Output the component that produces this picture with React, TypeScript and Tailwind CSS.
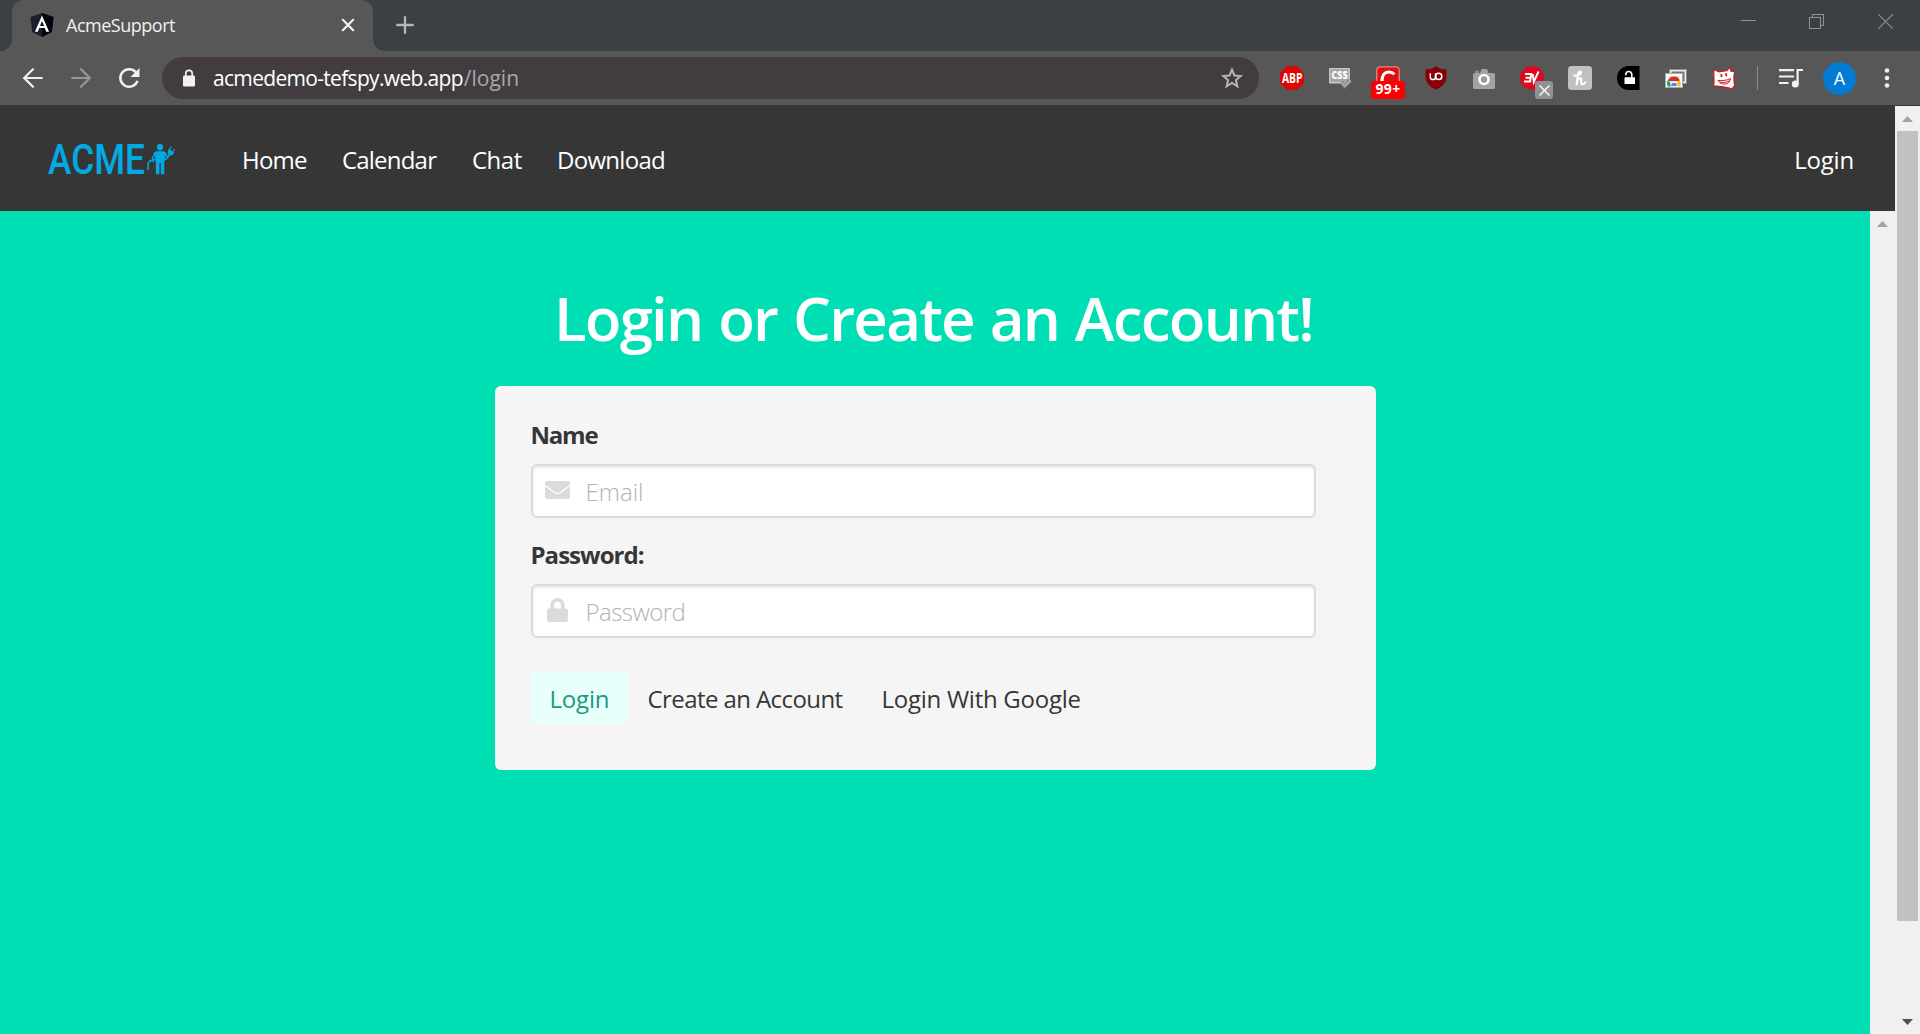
import React from "react";

const SANS = "font-['Open_Sans',sans-serif]";

function Favicon() {
  return (
    <svg className="h-6 w-6" viewBox="0 0 24 24">
      <path d="M12 0 23.5 4 21.8 19 12 24 2.2 19 .5 4Z" fill="#1b1e2b" />
      <path d="M12 0 23.5 4 21.8 19 12 24Z" fill="#03040c" />
      <path d="M12 2.6 4.9 18.8h2.9l1.4-3.7h5.6l1.4 3.7h2.9L12 2.6Zm0 5.4 2.1 5H9.9L12 8Z" fill="#fff" />
    </svg>
  );
}

function TabStrip() {
  return (
    <div className="flex h-[51px] bg-[#3c4043]">
      <div className="flex w-3 items-end bg-[#575757]">
        <div className="h-full w-full rounded-br-[12px] bg-[#3c4043]" />
      </div>
      <div className="w-[361px] bg-[#3c4043]">
        <div className="flex h-full items-center rounded-t-[12px] bg-[#575757] pr-[18px] pb-[2px] pl-[18px]">
          <Favicon />
          <span className="ml-3 text-[18px] leading-6 tracking-[-0.49px] text-[#f1f1f1]">AcmeSupport</span>
          <svg className="ml-auto h-[14px] w-[14px]" viewBox="0 0 14 14" stroke="#f1f1f1" strokeWidth="2.2" strokeLinecap="round">
            <path d="m1.8 1.8 10.4 10.4M12.2 1.8 1.8 12.2" />
          </svg>
        </div>
      </div>
      <div className="w-3 bg-[#575757]">
        <div className="h-full w-full rounded-bl-[12px] bg-[#3c4043]" />
      </div>
      <svg className="mt-4 ml-[11px] h-[18px] w-[18px]" viewBox="0 0 18 18" stroke="#b4b6b8" strokeWidth="2.4" strokeLinecap="round">
        <path d="M9 1.2v15.6M1.2 9h15.6" />
      </svg>
      <div className="ml-auto flex h-[43px] items-center text-[#8f9294]">
        <svg className="mr-[53px] h-[15px] w-[15px]" viewBox="0 0 15 15" stroke="currentColor" shapeRendering="crispEdges">
          <path d="M0 6.5h15" />
        </svg>
        <svg className="mr-[54px] h-[15px] w-[15px]" viewBox="0 0 15 15" stroke="currentColor" fill="none" shapeRendering="crispEdges">
          <path d="M.5 3.5h11v11H.5zM3.5 3V.5h11v11H12" />
        </svg>
        <svg className="mr-[27px] h-[15px] w-[15px]" viewBox="0 0 15 15" stroke="currentColor" strokeWidth="1.1">
          <path d="m0 0 15 15M15 0 0 15" />
        </svg>
      </div>
    </div>
  );
}

function AdblockIcon() {
  return (
    <svg className="h-6 w-6" viewBox="0 0 24 24">
      <path d="M7 0h10l7 7v10l-7 7H7l-7-7V7Z" fill="#dd0606" />
      <text x="2" y="17" fontFamily="Open Sans" fontSize="13.5" fontWeight="700" fill="#fff" textLength="20.500" lengthAdjust="spacingAndGlyphs">ABP</text>
    </svg>
  );
}

function CssIcon() {
  return (
    <svg className="h-6 w-6" viewBox="0 0 24 24">
      <rect x="1" y="2" width="21" height="15.5" rx="1" fill="#a5a5a5" />
      <rect x="1.700" y="2.700" width="19.600" height="14" rx=".5" fill="none" stroke="#c9c9c9" strokeWidth="1.200" />
      <text x="3.600" y="13.200" fontFamily="Open Sans" fontSize="10.500" fontWeight="800" fill="#fff" textLength="16" lengthAdjust="spacingAndGlyphs">CSS</text>
      <path d="m13.500 16.200 3.200 3.800 5.800-5.600" fill="none" stroke="#777" strokeWidth="4" />
      <path d="m13.500 16.200 3.200 3.800 5.800-5.600" fill="none" stroke="#aaa" strokeWidth="2.400" />
    </svg>
  );
}

function ColorIcon() {
  return (
    <div className="relative h-6 w-6">
      <svg className="h-6 w-6" viewBox="0 0 24 24">
        <rect x=".8" y=".8" width="22.400" height="22.400" rx="3.500" fill="#e01010" stroke="#f08080" strokeWidth="1.300" />
        <path d="M6 15c0-5.500 2.500-9 7-9 2.500 0 4 .8 5.300 2.300" fill="none" stroke="#fff" strokeWidth="3.200" />
      </svg>
      <span className="absolute top-[15px] left-[-5px] flex h-[18px] w-[34px] items-center justify-center rounded-[3px] bg-[#fb0000] pb-[2px] text-[14px] leading-4 font-bold tracking-[0.300px] text-white">
        99+
      </span>
    </div>
  );
}

function ShieldIcon() {
  return (
    <svg className="h-6 w-6" viewBox="0 0 24 24">
      <path d="M12 .3c3 2.200 6.500 3.200 10.500 3.200V10c0 7-4 10.500-10.500 13.700C5.500 20.500 1.500 17 1.500 10V3.500C5.500 3.500 9 2.500 12 .3Z" fill="#860006" />
      <path d="M6.300 7.300v3.600a2.600 2.600 0 0 0 5.200 0V7.300" fill="none" stroke="#fff" strokeWidth="1.500" />
      <circle cx="14.700" cy="10.400" r="3.100" fill="none" stroke="#fff" strokeWidth="1.500" />
    </svg>
  );
}

function CameraIcon() {
  return (
    <svg className="h-6 w-6" viewBox="0 0 24 24">
      <rect x="3" y="4.500" width="4" height="4" rx="1" fill="#8b8b8b" />
      <path d="M2.500 7H8l1.500-4h5.500l1.500 4h5a1.500 1.500 0 0 1 1.500 1.500v13a1.500 1.500 0 0 1-1.500 1.500h-19A1.500 1.500 0 0 1 1 21.500v-13A1.500 1.500 0 0 1 2.500 7Z" fill="#a3a3a3" />
      <circle cx="12" cy="13.500" r="4.500" fill="#999" stroke="#fff" strokeWidth="2.600" />
    </svg>
  );
}

function ExpressIcon() {
  return (
    <div className="relative h-6 w-6">
      <svg className="h-6 w-6" viewBox="0 0 24 24">
        <circle cx="12" cy="12" r="12" fill="#da0a20" />
        <path d="M5 8h6.300l-1.200 7.500H4M5.500 11.800h5M12.800 8.200l1 7.800L18.500 5.500" fill="none" stroke="#fff" strokeWidth="1.900" />
      </svg>
      <span className="absolute top-[15px] left-[15px] flex h-[18px] w-[18px] items-center justify-center rounded-[3px] bg-[#929292]">
        <svg className="h-[11px] w-[11px]" viewBox="0 0 11 11" stroke="#fff" strokeWidth="1.400">
          <path d="m.5.5 10 10M10.500.5l-10 10" />
        </svg>
      </span>
    </div>
  );
}

function HoneyIcon() {
  return (
    <svg className="h-6 w-6" viewBox="0 0 24 24">
      <rect width="24" height="24" rx="3.500" fill="#c0c0c0" />
      <path d="M6.500 9.500c3 .8 7-1.200 6.500-3.400-.5-1.500-2.500-.6-3 1.900L8.600 18.500c.6-3.500 1.900-6.500 3.700-6.500 2.500 0-.6 6.300 1.900 6.300 1.400 0 2.500-.8 3.300-2" fill="none" stroke="#fff" strokeWidth="2" strokeLinecap="round" strokeLinejoin="round" />
    </svg>
  );
}

function UnlockIcon() {
  return (
    <svg className="h-6 w-6" viewBox="0 0 24 24">
      <path d="M12.500 0h11v24h-11A11.500 12 0 0 1 12.500 0Z" fill="#000" />
      <rect x="8.500" y="11.300" width="10.500" height="6.700" rx=".6" fill="#fff" />
      <path d="M9.800 9.200V8.500a3 3 0 0 1 6 0v3" fill="none" stroke="#fff" strokeWidth="1.600" />
    </svg>
  );
}

function GalleryIcon() {
  return (
    <svg className="h-6 w-6" viewBox="0 0 24 24">
      <rect x="5.500" y="3.500" width="17" height="14" fill="#ededed" stroke="#8d8d8d" />
      <rect x="7.500" y="5.500" width="13" height="10" fill="#777" />
      <rect x="1.500" y="7.500" width="17" height="14" fill="#fff" stroke="#a8a8a8" />
      <rect x="3.500" y="10" width="13" height="10.500" fill="#e9e9e9" />
      <path d="M4.200 15a6 6 0 0 1 11.600 0Z" fill="#da2d20" />
      <path d="M4.200 13.500 8 20.500H4A6.500 6.500 0 0 1 4.200 13.500Z" fill="#1fa463" />
      <path d="M16 14.800a6 6 0 0 1 0 5.700h-4l2-5.700Z" fill="#fbc116" />
      <path d="M6.800 20.500a3.300 3.300 0 1 1 6.400 0Z" fill="#4285f4" stroke="#fff" strokeWidth=".8" />
    </svg>
  );
}

function MonsterIcon() {
  return (
    <svg className="h-6 w-6" viewBox="0 0 24 24">
      <path d="m2 3.500 4.500 2.300L15 4.600l3-3.700.8 4.200 3.700.4c-.8 5.500-.8 10.500.3 13.500l-2.600 3.900C15 21 8 20.500 1.600 19.800 2.800 15 1.300 9.500 2 3.500Z" fill="#fff" stroke="#cf1a20" strokeWidth="1.200" strokeLinejoin="round" />
      <path d="m9.200 8 .4 3.200M14 7.200l.4 3.200" stroke="#cf1a20" strokeWidth="1.700" />
      <path d="M6 14.300c4 .8 8.500.2 12.500-1.800-.6 3.600-2.700 5.700-5.700 5.600-3 0-5.700-1.300-6.800-3.800ZM8 16.200c3.500.7 6.500.2 9.300-1.400" fill="none" stroke="#cf1a20" strokeWidth="1" />
    </svg>
  );
}

const EXTENSIONS = [
  AdblockIcon, CssIcon, ColorIcon, ShieldIcon, CameraIcon,
  ExpressIcon, HoneyIcon, UnlockIcon, GalleryIcon, MonsterIcon,
];

function Toolbar() {
  return (
    <div className="flex h-[54px] items-center bg-[#575757] pl-[21px]">
      <svg className="mr-6 h-6 w-6" viewBox="0 0 24 24" fill="none" stroke="#f1f1f1" strokeWidth="2.200" strokeLinecap="round">
        <path d="M20.800 12H3.500M12 3.200 3.200 12l8.800 8.800" />
      </svg>
      <svg className="mr-6 h-6 w-6" viewBox="0 0 24 24" fill="none" stroke="#979797" strokeWidth="2.200" strokeLinecap="round">
        <path d="M3.200 12h17.300M12 3.200l8.800 8.800-8.800 8.800" />
      </svg>
      <svg className="h-6 w-6" viewBox="0 0 24 24" fill="none" stroke="#f1f1f1" strokeWidth="2.500">
        <path d="M20.500 14.800a8.800 8.800 0 1 1-1.800-8.700L21 8.500" />
        <path d="M22.500 2v9h-9Z" fill="#f1f1f1" stroke="none" />
      </svg>
      <div className="ml-[21px] flex h-[42px] w-[1097px] items-center rounded-full bg-[#423c40] pr-4 pl-[21px]">
        <svg className="h-[18px] w-[12px]" viewBox="0 0 12 18">
          <rect y="6.500" width="12" height="11" rx="1.300" fill="#f1f1f1" />
          <path d="M2.800 7.500V4.600a3.200 3.200 0 0 1 6.400 0v2.900" fill="none" stroke="#f1f1f1" strokeWidth="1.700" />
        </svg>
        <span className="ml-[18px] text-[21px] leading-7 tracking-[-0.680px] text-white">acmedemo-tefspy.web.app</span>
        <span className="ml-[1px] text-[21px] leading-7 text-[#a9a7a8]">/login</span>
        <svg className="ml-auto h-[22px] w-[22px]" viewBox="0 0 22 22" fill="none" stroke="#b5b3b4" strokeWidth="2">
          <path d="m11 2.600 2.400 5.900 6.400.5-4.900 4.100 1.500 6.200L11 16l-5.400 3.300 1.500-6.200L2.200 9l6.400-.5Z" />
        </svg>
      </div>
      <div className="ml-[9px] flex">
        {EXTENSIONS.map((Icon, i) => (
          <div key={i} className="flex w-12 justify-center">
            <Icon />
          </div>
        ))}
      </div>
      <div className="ml-[9px] h-6 w-px bg-[#8a8a8a]" />
      <svg className="ml-[21px] h-[22px] w-6" viewBox="0 0 24 22" fill="none" stroke="#f1f1f1" strokeWidth="2.200">
        <path d="M0 3.200h15M0 9.500h15M0 16h9.500M18.600 17V3h5.400" />
        <circle cx="16.300" cy="17" r="3.500" fill="#f1f1f1" stroke="none" />
      </svg>
      <div className="ml-5 flex h-[33px] w-[33px] items-center justify-center rounded-full bg-[#037bd4] text-[18px] text-white">
        A
      </div>
      <svg className="ml-[28px] h-6 w-[6px]" viewBox="0 0 6 24" fill="#f1f1f1">
        <circle cx="3" cy="4.500" r="2.300" />
        <circle cx="3" cy="12" r="2.300" />
        <circle cx="3" cy="19.500" r="2.300" />
      </svg>
    </div>
  );
}

function Logo() {
  return (
    <svg className="h-[60px] w-[130px]" viewBox="0 -12 130 60" fill="#03a9e5">
      <text x="0" y="33" fontFamily="Roboto" fontSize="42" fontWeight="500" textLength="97" lengthAdjust="spacingAndGlyphs">ACME</text>
      <circle cx="112" cy="6.200" r="3.100" />
      <path d="M108 10.300h8l2 1.700-1.700 7.500v13.700h-3.500V22h-1.400v11.200h-3.600V19.500L106 12Z" />
      <path d="M107 11.500 104.300 18l5 1.600M117 11.500l2.600 5.300-4.300 2.700M119.300 16.800l3.200-4.500M106 20.500c-3.200-1.800-6-.3-5.800 2.500.2 2.200-1.500 4.500.6 6" fill="none" stroke="#03a9e5" strokeWidth="1.500" />
      <path d="m120.500 7.800 5.600 3.800-1.600 2.400-3.200.7-1.600-3Z" />
      <path d="m121.700 8.800 1.500-3.300M124.600 10.800l2.200-2.800" stroke="#03a9e5" strokeWidth="1.100" />
    </svg>
  );
}

function SiteNav() {
  return (
    <nav className="flex h-[106px] items-center bg-[#363636] pr-[41px] pl-12 text-[24px] leading-9 text-white">
      <div className="mt-[2px]">
        <Logo />
      </div>
      <div className="mt-[3px] ml-16 flex flex-1 items-center">
        <a className="w-[100px] tracking-[-0.800px]">Home</a>
        <a className="w-[130px] tracking-[-0.800px]">Calendar</a>
        <a className="w-[85px] tracking-[-0.500px]">Chat</a>
        <a className="tracking-[-0.700px]">Download</a>
        <a className="ml-auto tracking-[-0.200px]">Login</a>
      </div>
    </nav>
  );
}

function ArrowUp() {
  return (
    <svg className="h-[6px] w-[11px]" viewBox="0 0 11 6" fill="#a3a3a3">
      <path d="M5.500 0 11 6H0Z" />
    </svg>
  );
}

type FieldProps = {
  label: string;
  labelClass: string;
  placeholder: string;
  placeholderClass: string;
  icon: React.ReactNode;
  type: string;
};

function Field({ label, labelClass, placeholder, placeholderClass, icon, type }: FieldProps) {
  return (
    <div>
      <label className={"block h-9 text-[24px] leading-9 font-bold text-[#363636] " + labelClass}>{label}</label>
      <div className="mt-[11px] flex h-[54px] w-[785px] items-center rounded-[6px] border-2 border-[#dbdbdb] bg-white pl-3 shadow-[inset_0_1.500px_3px_rgba(10,10,10,0.1)]">
        <div className="flex w-[26px] justify-center">{icon}</div>
        <input
          type={type}
          placeholder={placeholder}
          className={"ml-[15px] h-9 flex-1 bg-transparent pt-px text-[24px] leading-9 font-light outline-none placeholder:text-[#b3b3b3] " + placeholderClass}
        />
      </div>
    </div>
  );
}

function LoginCard() {
  return (
    <div className="h-[384px] w-[881px] rounded-[6px] bg-[#f5f5f5] pt-[31px] pl-9">
      <div className="flex flex-col gap-[19px]">
        <Field
          label="Name"
          labelClass="tracking-[-1.200px]"
          type="email"
          placeholder="Email"
          placeholderClass=""
          icon={
            <svg className="mb-[2px] h-[18px] w-[25px]" viewBox="0 0 25 18" fill="#dbdbdb">
              <path d="M2.300 0h20.400A2.300 2.300 0 0 1 25 2.300v1.200l-9.800 7.500c-1.700 1.300-3.700 1.300-5.400 0L0 3.500V2.300A2.300 2.300 0 0 1 2.300 0Z" />
              <path d="m0 5.200 9 6.800c2.200 1.600 4.800 1.600 7 0l9-6.800v10.500a2.300 2.300 0 0 1-2.300 2.300H2.300A2.300 2.300 0 0 1 0 15.700Z" />
            </svg>
          }
        />
        <Field
          label="Password:"
          labelClass="tracking-[-0.960px]"
          type="password"
          placeholder="Password"
          placeholderClass="tracking-[-0.550px]"
          icon={
            <svg className="mb-[3px] h-6 w-[21px]" viewBox="0 0 21 24" fill="#dbdbdb">
              <path d="M18.750 10.500h-1.130V7.100a7.100 7.100 0 0 0-14.240 0v3.400H2.250A2.250 2.250 0 0 0 0 12.750v9A2.250 2.250 0 0 0 2.250 24h16.500A2.250 2.250 0 0 0 21 21.750v-9a2.250 2.250 0 0 0-2.250-2.250Zm-4.880 0H7.130V7.100a3.370 3.370 0 0 1 6.740 0Z" />
            </svg>
          }
        />
      </div>
      <div className="mt-[33px] flex h-[54px] items-stretch text-[24px] leading-[55px] text-[#363636]">
        <button className="w-[98px] rounded-[6px] bg-[#e8fffb] pl-[19px] text-left tracking-[-0.200px] text-[#189a80]">Login</button>
        <button className="ml-[19px] w-[234px] text-left tracking-[-0.580px]">Create an Account</button>
        <button className="text-left tracking-[-0.260px]">Login With Google</button>
      </div>
    </div>
  );
}

export default function App() {
  return (
    <div className={"flex h-[1034px] w-[1920px] flex-col overflow-hidden " + SANS}>
      <TabStrip />
      <Toolbar />
      <div className="flex flex-1">
        <div className="flex w-[1895px] flex-col">
          <SiteNav />
          <div className="flex flex-1">
            <main className="flex w-[1870px] flex-col items-center bg-[#00deb3] pt-[73px]">
              <h1 className="mr-[3px] h-[68px] text-[60px] leading-[68px] font-semibold tracking-[-1.780px] text-white [word-spacing:2px]">
                Login or Create an Account!
              </h1>
              <div className="mt-[34px]">
                <LoginCard />
              </div>
            </main>
            <div className="flex flex-1 justify-center bg-[#f0f0f0] pt-[10px]">
              <ArrowUp />
            </div>
          </div>
        </div>
        <div className="flex flex-1 flex-col items-center border-t border-[#363636] bg-[#f0f0f0] pt-[10px]">
          <ArrowUp />
          <div className="mt-[9px] h-[790px] w-[21px] bg-[#c1c1c1]" />
          <svg className="mt-auto mb-[9px] h-[6px] w-[11px]" viewBox="0 0 11 6" fill="#4f4f4f">
            <path d="M0 0h11L5.500 6Z" />
          </svg>
        </div>
      </div>
    </div>
  );
}
